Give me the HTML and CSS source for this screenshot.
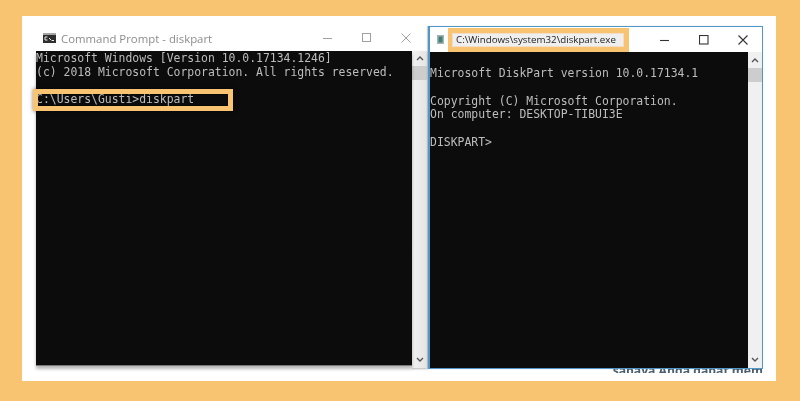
FILE: index.html
```html
<!DOCTYPE html>
<html lang="en">
<head>
<meta charset="utf-8">
<title>diskpart</title>
<link rel="stylesheet" href="styles.css">
</head>
<body>
<main class="panel">
  <section class="win win-left">
    <header class="titlebar titlebar-left">
      <svg class="cmd-icon" viewBox="0 0 13 10" aria-hidden="true"><rect width="13" height="10" fill="#2e2e2e"/><rect width="13" height="2" fill="#a5a5a5"/><path d="M2 4H4.5M2 4V7H4.5M6 5L8 7M8.5 7.5H11" stroke="#e8e8e8" stroke-width="1" fill="none"/></svg>
      <span class="title-left">Command Prompt - diskpart</span>
      <span class="controls controls-left">
        <svg viewBox="0 0 10 10"><path d="M0 5.5H9"/></svg>
        <svg viewBox="0 0 10 10"><rect x=".5" y=".5" width="8" height="8"/></svg>
        <svg viewBox="0 0 10 10"><path d="M.5.5L9.5 9.5M9.5.5L.5 9.5"/></svg>
      </span>
    </header>
    <div class="body">
      <div class="console console-left">
<pre class="term">Microsoft Windows [Version 10.0.17134.1246]
(c) 2018 Microsoft Corporation. All rights reserved.

C:\Users\Gusti&gt;diskpart</pre>
        <div class="mark-cmd"></div>
      </div>
      <div class="scroll scroll-left">
        <svg class="arrow" viewBox="0 0 8 5"><path d="M1 4L4 1L7 4"/></svg>
        <div class="thumb"></div>
        <svg class="arrow arrow-down" viewBox="0 0 8 5"><path d="M1 1L4 4L7 1"/></svg>
      </div>
    </div>
  </section>

  <div class="right-col">
    <section class="win win-right">
      <header class="titlebar titlebar-right">
        <svg class="exe-icon" viewBox="0 0 7 9" aria-hidden="true"><rect width="7" height="9" fill="#a3b5b2"/><rect x="1.5" y="1.5" width="4" height="6" fill="#3f7f75"/></svg>
        <span class="path-mark"><span class="path-text">C:\Windows\system32\diskpart.exe</span></span>
        <span class="controls controls-right">
          <svg viewBox="0 0 10 10"><path d="M0 5.5H9"/></svg>
          <svg viewBox="0 0 10 10"><rect x=".5" y=".5" width="8.5" height="8.5"/></svg>
          <svg viewBox="0 0 10 10"><path d="M.5.5L9.5 9.5M9.5.5L.5 9.5"/></svg>
        </span>
      </header>
      <div class="body">
        <div class="console console-right">
<pre class="term">Microsoft DiskPart version 10.0.17134.1

Copyright (C) Microsoft Corporation.
On computer: DESKTOP-TIBUI3E

DISKPART&gt;</pre>
        </div>
        <div class="scroll scroll-right">
          <svg class="arrow" viewBox="0 0 8 5"><path d="M1 4L4 1L7 4"/></svg>
          <div class="thumb"></div>
          <svg class="arrow arrow-down" viewBox="0 0 8 5"><path d="M1 1L4 4L7 1"/></svg>
        </div>
      </div>
    </section>
    <p class="cut-text">sabaya Anda dapat mem</p>
  </div>
</main>
</body>
</html>
```
FILE: styles.css
```css
* { box-sizing: border-box; }
html, body { margin: 0; height: 100%; }
body {
  background: #f8c471;
  padding: 16px 24px 20px 22px;
  overflow: hidden;
}
.panel {
  background: #fff;
  height: 365px;
  padding: 10px 13px 0 14px;
  display: flex;
  align-items: flex-start;
}
.win-left { width: 392px; flex: none; }
.titlebar { display: flex; align-items: center; }
.titlebar-left { height: 25px; padding: 0 0 1px 7px; }
.cmd-icon { width: 13px; height: 10px; flex: none; filter: blur(.3px); }
.title-left {
  font: 11.4px "Open Sans", sans-serif;
  color: #8c8c8c;
  margin-left: 5px;
  filter: blur(.4px);
}
.controls { margin-left: auto; display: flex; }
.controls svg { fill: none; stroke: #a0a0a0; stroke-width: 1; width: 10px; height: 10px; display: block; }
.controls-left { gap: 29px; padding-right: 17px; }
.controls-right { gap: 29px; padding-right: 14px; }
.controls-right svg { stroke: #333; stroke-width: 1.1; }
.body { display: flex; align-items: flex-start; }
.console {
  background: #0c0c0c;
  position: relative;
  flex: none;
}
.console-left {
  width: 376px;
  height: 315px;
  border-bottom: 1px solid #777;
  box-shadow: 0 3px 3px rgba(0,0,0,.28);
}
.console-right { width: 318px; height: 316px; }
.term {
  margin: 0;
  font: 11.43px/13.8px "DejaVu Sans Mono", monospace;
  color: #bdbdbd;
  filter: blur(.5px);
  white-space: pre;
}
.console-left .term { padding-top: 1px; }
.console-right .term { padding-top: 15px; }
.mark-cmd {
  position: absolute;
  left: -3px;
  top: 38px;
  width: 200px;
  height: 22px;
  border: 5px solid #f8c471;
  box-shadow: 0 0 4px rgba(0,0,0,.5), inset 0 0 2px rgba(0,0,0,.4);
}
.scroll {
  background: linear-gradient(90deg, #f2f2f2, #e4e4e4);
  display: flex;
  flex-direction: column;
  align-items: center;
  flex: none;
}
.scroll-left {
  width: 15px;
  height: 317px;
  padding-top: 5px;
  box-shadow: 0 1px 2px rgba(0,0,0,.3);
}
.scroll-right { width: 14px; height: 316px; padding-top: 6px; background: #f0f0f0; }
.arrow { width: 8px; height: 5px; fill: none; stroke: #555; stroke-width: 1.4; flex: none; }
.thumb { width: 100%; height: 14px; background: #cdcdcd; margin-top: 5px; }
.arrow-down { margin-top: auto; margin-bottom: 6px; }
.right-col { width: 335px; flex: none; }
.win-right {
  border: 1px solid #4e97c8;
  border-left-width: 2px;
  height: 343px;
  display: flex;
  flex-direction: column;
  box-shadow: -1px 0 1px rgba(0,0,0,.2);
}
.titlebar-right { height: 25px; padding-left: 7px; flex: none; }
.exe-icon { width: 7px; height: 9px; flex: none; margin: 0 4px 0 0; filter: blur(.3px); }
.path-mark {
  background: #f8c471;
  align-self: flex-end;
  height: 24px;
  padding: 0 6px 0 5px;
  display: flex;
  align-items: center;
  width: 181px;
}
.path-text {
  background: #efefef;
  font: 9.75px/12px "Open Sans", sans-serif;
  color: #222;
  padding: 0 3px;
  width: 100%;
  white-space: nowrap;
  outline: 1px solid #f3dcc8;
  filter: blur(.25px);
}
.cut-text {
  margin: 0;
  height: 4px;
  overflow: hidden;
  font: bold 12.2px/4px "Open Sans", sans-serif;
  color: #4a5f70;
  text-align: right;
  white-space: nowrap;
  filter: blur(.4px);
}
```
